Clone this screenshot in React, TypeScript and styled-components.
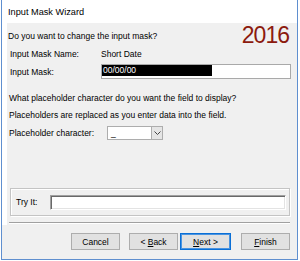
import React from "react";
import styled, { createGlobalStyle } from "styled-components";

const Global = createGlobalStyle`
  html, body { margin: 0; padding: 0; background: #fff; }
  body {
    font-family: "Liberation Sans", Arial, sans-serif;
    font-size: 8.5px;
    color: #000;
  }
  * { box-sizing: border-box; }
`;

const Window = styled.div`
  margin-left: 1px;
  width: 297px;
  height: 260px;
  border: 1px solid #5f8fcf;
  border-top: none;
  display: flex;
  flex-direction: column;
  background: #fff;
`;

const TitleBar = styled.div`
  height: 23px;
  flex: none;
  padding-left: 6px;
  display: flex;
  align-items: center;
  font-size: 9.2px;
  color: #000;
`;

const Page = styled.div`
  margin-left: 5px;
  height: 202px;
  flex: none;
  background: #f0f0f0;
  display: flex;
  flex-direction: column;
  padding: 0 0 1px 1px;
`;

const Header = styled.div`
  height: 24px;
  display: flex;
  justify-content: space-between;
  align-items: flex-start;
  padding-right: 8px;
`;

const Text = styled.div<{ $mt?: number; $ml?: number }>`
  line-height: 12px;
  white-space: nowrap;
  margin-top: ${(p) => p.$mt ?? 0}px;
  margin-left: ${(p) => p.$ml ?? 0}px;
`;

const Year = styled.div`
  font-size: 23px;
  line-height: 24px;
  letter-spacing: -1px;
  color: #8c1a0e;
`;

const MaskGrid = styled.div`
  margin: 1px 0 0 2px;
  display: grid;
  grid-template-columns: 91px 190px;
  grid-template-rows: 12px 15px;
  row-gap: 4px;
  align-items: center;
  line-height: 12px;
`;

const MaskField = styled.div`
  height: 15px;
  background: #fff;
  border: 1px solid #a9a9a9;
  padding: 0 0 2px 0;
  display: flex;
`;

const Selection = styled.span`
  width: 110px;
  height: 11px;
  background: #000;
  color: #fff;
  line-height: 11px;
  padding-left: 1px;
`;

const PlaceholderRow = styled.div`
  margin: 5px 0 0 1px;
  display: flex;
  align-items: center;
  line-height: 12px;
`;

const Label = styled.span<{ $w: number }>`
  width: ${(p) => p.$w}px;
  flex: none;
  white-space: nowrap;
`;

const Combo = styled.div`
  width: 56px;
  height: 14px;
  background: #fff;
  border: 1px solid #adadad;
  display: flex;
  align-items: stretch;
`;

const ComboValue = styled.span`
  flex: 1;
  padding-left: 3px;
  line-height: 12px;
`;

const ComboButton = styled.span`
  width: 11px;
  background: #e5e5e5;
  border-left: 1px solid #adadad;
  display: flex;
  align-items: center;
  justify-content: center;
`;

const Frame = styled.div`
  margin: auto 7px 0 2px;
  height: 28px;
  border: 1px solid #c4c4c4;
  box-shadow: inset 1px 1px 0 #fff, 1px 1px 0 #fff;
  display: flex;
  align-items: center;
  padding: 0 3px 0 5px;
`;

const TryInput = styled.div`
  flex: 1;
  height: 15px;
  background: #fff;
  border-top: 1px solid #a0a0a0;
  border-left: 1px solid #a0a0a0;
  border-right: 1px solid #fff;
  border-bottom: 1px solid #fff;
  box-shadow: inset 1px 1px 0 #696969, inset -1px -1px 0 #e3e3e3;
`;

const Separator = styled.div`
  margin: 6px 7px 0 1px;
  height: 2px;
  border-top: 1px solid #a0a0a0;
  border-bottom: 1px solid #fff;
`;

const Footer = styled.div`
  flex: 1;
  background: #f0f0f0;
  display: flex;
  justify-content: flex-end;
  align-items: flex-start;
  padding: 8px 7px 0 0;
`;

const Button = styled.button<{ $w?: number; $ml?: number; $primary?: boolean }>`
  width: ${(p) => p.$w ?? 49}px;
  height: 17px;
  margin: 0 0 0 ${(p) => p.$ml ?? 0}px;
  padding: 0;
  background: #e1e1e1;
  border: 1px solid ${(p) => (p.$primary ? "#0a6fd6" : "#adadad")};
  box-shadow: ${(p) => (p.$primary ? "inset 0 0 0 1px #4a94e0" : "none")};
  font-family: "Liberation Sans", Arial, sans-serif;
  font-size: 8.5px;
  color: #000;
  line-height: 14px;
  text-align: center;
`;

const U = styled.span`
  text-decoration: underline;
`;

export default function App() {
  return (
    <>
      <Global />
      <Window>
        <TitleBar>Input Mask Wizard</TitleBar>
        <Page>
          <Header>
            <Text $mt={7}>Do you want to change the input mask?</Text>
            <Year>2016</Year>
          </Header>
          <MaskGrid>
            <span>Input Mask Name:</span>
            <span>Short Date</span>
            <span>Input Mask:</span>
            <MaskField>
              <Selection>00/00/00</Selection>
            </MaskField>
          </MaskGrid>
          <Text $mt={13} $ml={1}>
            What placeholder character do you want the field to display?
          </Text>
          <Text $mt={5} $ml={1}>
            Placeholders are replaced as you enter data into the field.
          </Text>
          <PlaceholderRow>
            <Label $w={98}>Placeholder character:</Label>
            <Combo>
              <ComboValue>_</ComboValue>
              <ComboButton>
                <svg width="7" height="4" viewBox="0 0 7 4">
                  <path d="M0.5 0.5 L3.5 3.5 L6.5 0.5" fill="none" stroke="#444" strokeWidth="1" />
                </svg>
              </ComboButton>
            </Combo>
          </PlaceholderRow>
          <Frame>
            <Label $w={34}>Try It:</Label>
            <TryInput />
          </Frame>
          <Separator />
        </Page>
        <Footer>
          <Button>Cancel</Button>
          <Button $ml={9}>
            &lt; <U>B</U>ack
          </Button>
          <Button $ml={2} $w={51} $primary>
            <U>N</U>ext &gt;
          </Button>
          <Button $ml={10}>
            <U>F</U>inish
          </Button>
        </Footer>
      </Window>
    </>
  );
}
